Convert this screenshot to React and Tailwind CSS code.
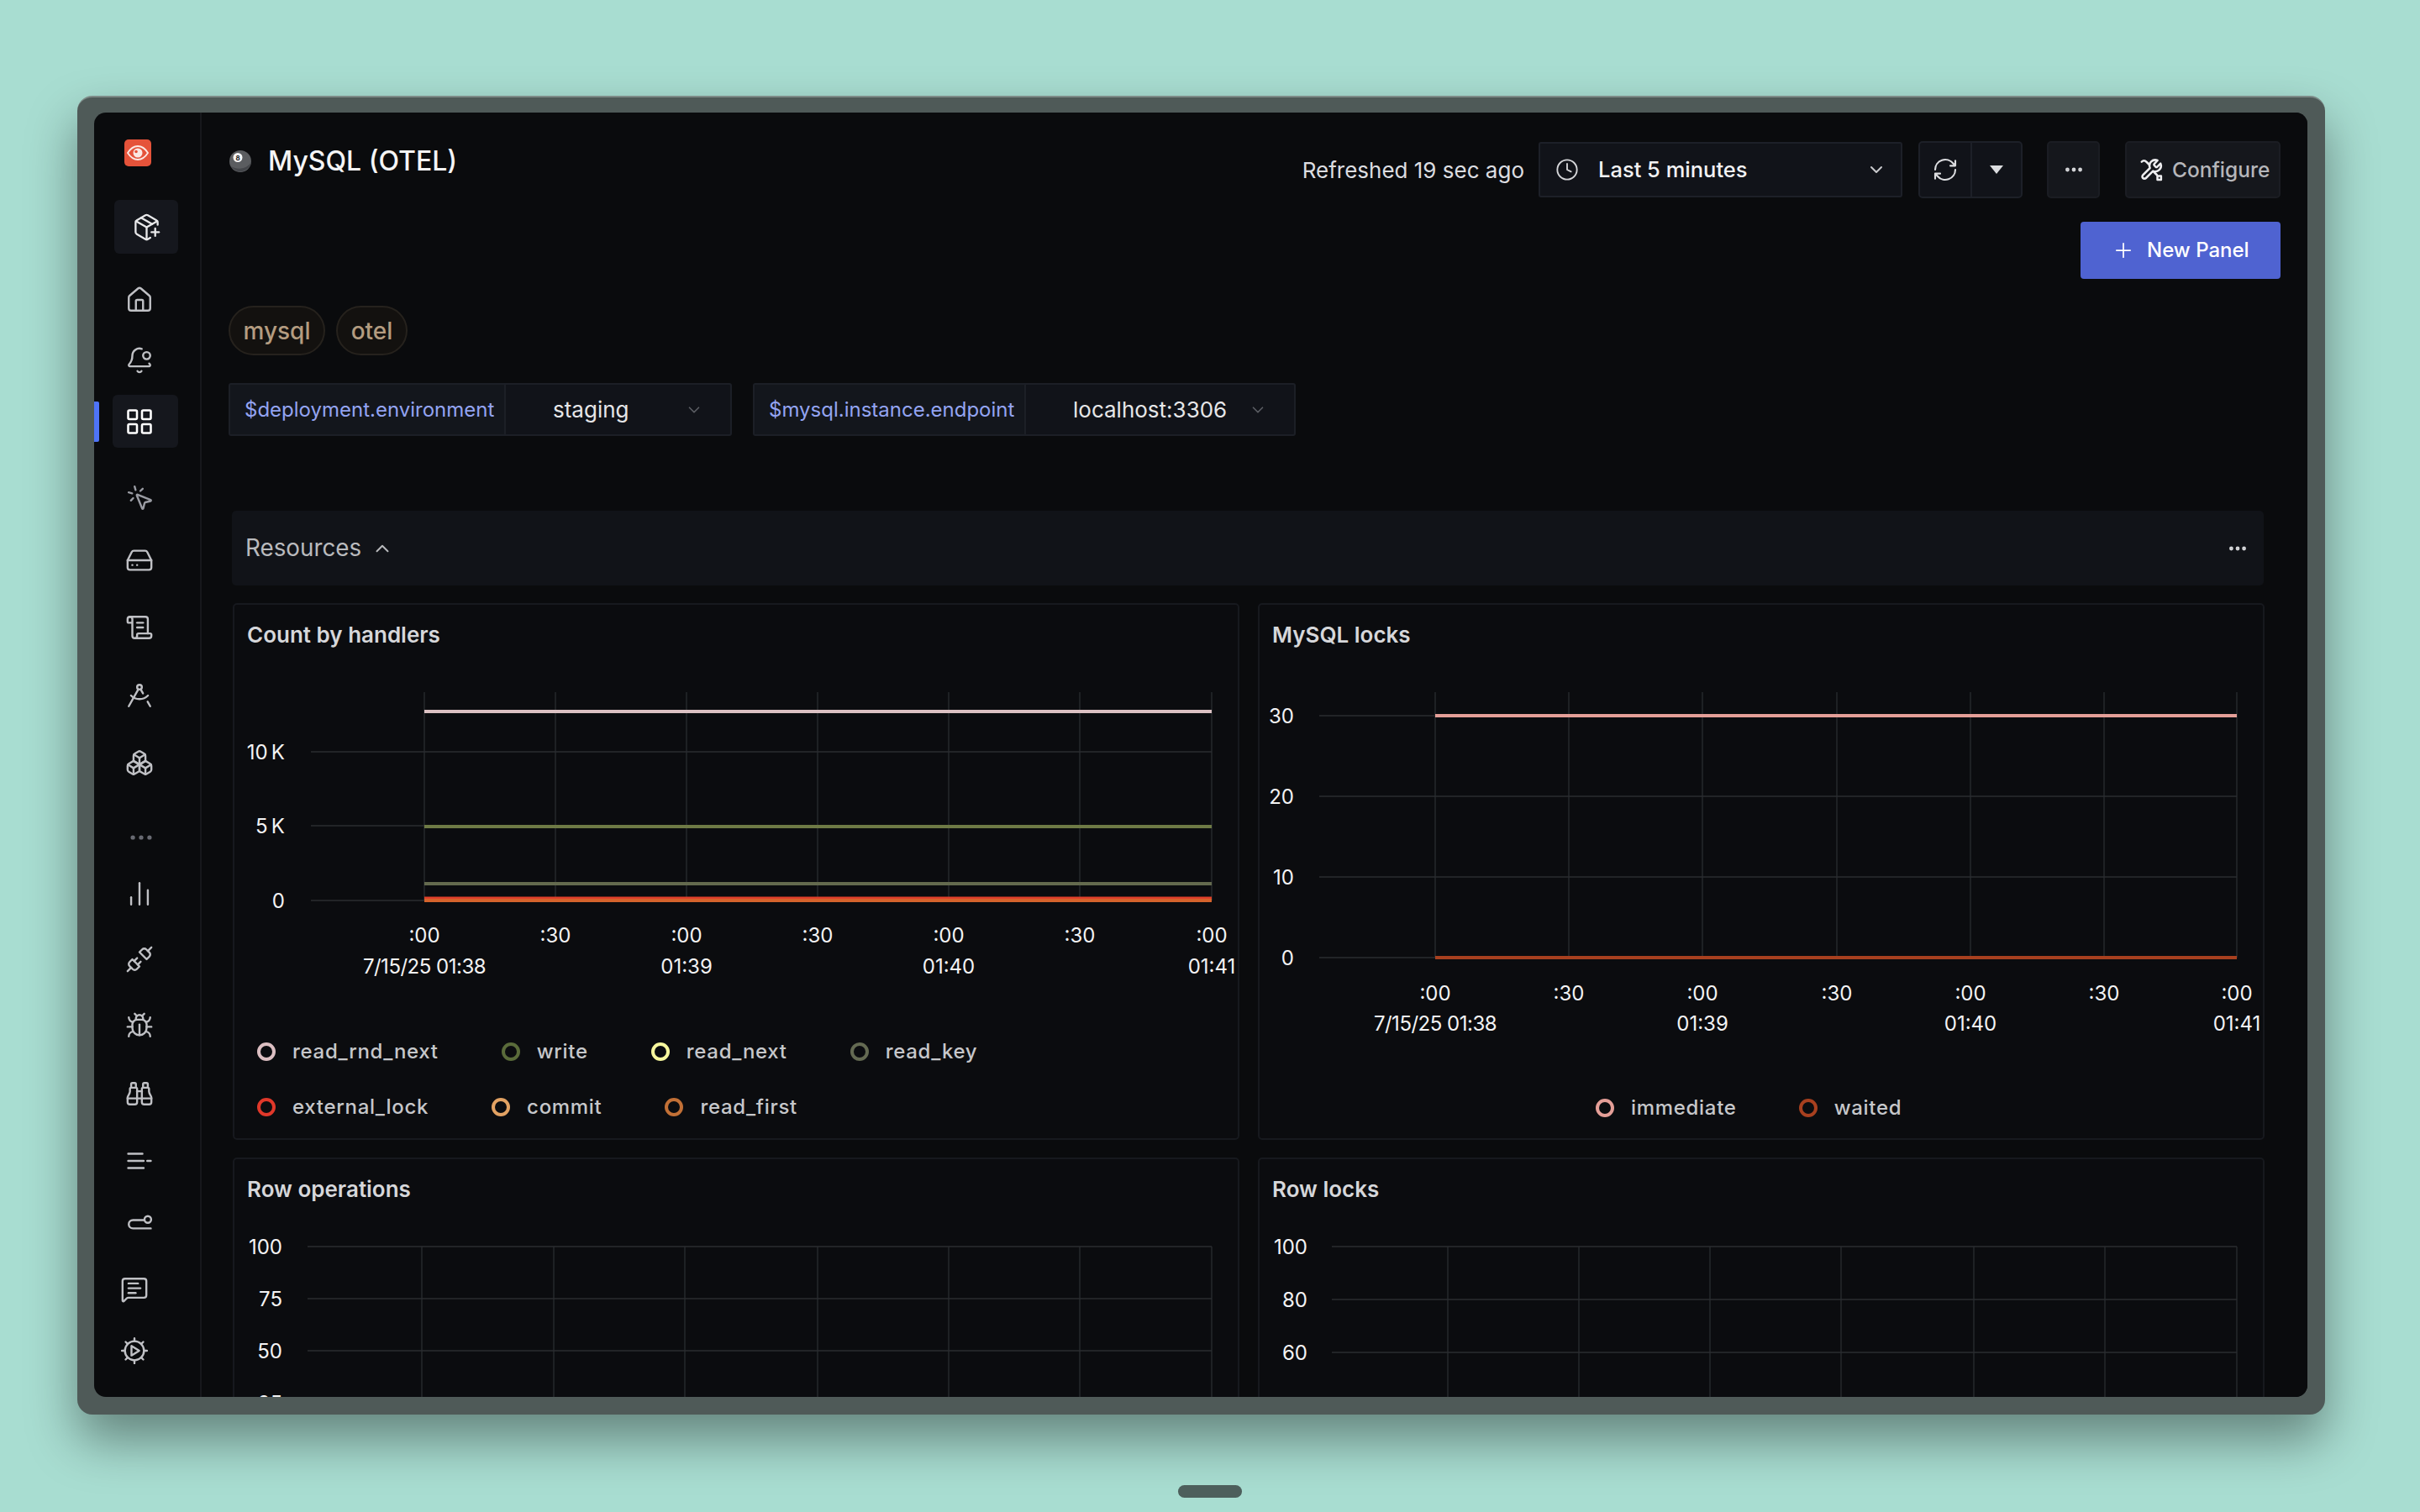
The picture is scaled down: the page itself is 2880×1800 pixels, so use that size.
import {
  House, BellDot, LayoutGrid, MousePointerClick, HardDrive, ScrollText, DraftingCompass, Boxes,
  Ellipsis, ChartNoAxesColumn, Unplug, Bug, Binoculars, MessageSquareText, PackagePlus,
  ChevronDown, ChevronUp, Clock, Plus,
} from "lucide-react"

const LogsIcon = (props) => (
  <svg viewBox="0 0 24 24" fill="none" stroke="currentColor" strokeWidth={2} strokeLinecap="round" {...props}>
    <path d="M2.500 6h12M2.500 12h13M18.500 12h3M2.500 18h13" />
  </svg>
)

const TraceIcon = (props) => (
  <svg viewBox="0 0 24 24" fill="none" stroke="currentColor" strokeWidth={2} strokeLinecap="round" {...props}>
    <path d="M16 9.500H6.500a3.500 3.500 0 0 0 0 7H21.500" />
    <circle cx="19" cy="9" r="2.800" />
  </svg>
)

const GearPlayIcon = (props) => (
  <svg viewBox="0 0 24 24" fill="none" stroke="currentColor" strokeWidth={2} strokeLinecap="round" strokeLinejoin="round" {...props}>
    <circle cx="12" cy="12" r="8" />
    <path d="M12 1.500v2.500M12 20v2.500M1.500 12H4M20 12h2.500M4.600 4.600l1.800 1.800M17.600 17.600l1.800 1.800M4.600 19.400l1.800-1.800M17.600 6.400l1.800-1.800" />
    <path d="M9.500 8v8l6.500-4z" />
  </svg>
)

const ConfigureIcon = (props) => (
  <svg viewBox="0 0 24 24" fill="none" stroke="currentColor" strokeWidth={2} strokeLinecap="round" strokeLinejoin="round" {...props}>
    <path d="M15 6.500a1 1 0 0 0 0 1.400l1.400 1.400a1 1 0 0 0 1.400 0l3.200-3.200a5.500 5.500 0 0 1-7.200 7.200l-6.700 6.700a2 2 0 0 1-2.900-2.900l6.700-6.700a5.500 5.500 0 0 1 7.200-7.200z" />
    <path d="M3 4.500c2-2 3.500-1 5 .5l2.500 2.500M14.500 14l3 3" />
    <path d="M18 18h3.500v3.500H18z" />
  </svg>
)

const Logo = () => (
  <div className="w-8 h-8 rounded-[5px] bg-[#e5533a] flex items-center justify-center">
    <svg viewBox="0 0 32 32" className="w-8 h-8" fill="none">
      <path d="M4 16c3.500-5.500 7.500-8 12-8s8.500 2.500 12 8c-3.500 5.500-7.500 8-12 8s-8.500-2.500-12-8z" stroke="#fbe9e4" strokeWidth="1.800" />
      <circle cx="16" cy="16" r="5.500" fill="#fbe9e4" />
      <circle cx="14" cy="14.500" r="1.800" fill="#e5533a" />
    </svg>
  </div>
)

const EightBall = () => (
  <svg viewBox="0 0 28 28" className="w-[28px] h-[28px] shrink-0">
    <circle cx="14" cy="14" r="13" fill="#5b5d60" />
    <path d="M3 20a13 13 0 0 0 24-6c-2 7-14 12-24 6z" fill="#44464a" />
    <circle cx="11" cy="9.500" r="5.500" fill="#f4f4f4" />
    <text x="11" y="12.500" fontSize="8" fontWeight="700" textAnchor="middle" fill="#222" fontFamily="Inter, sans-serif">8</text>
  </svg>
)

const navItems = [
  { Icon: House, mt: "mt-[41px]" },
  { Icon: BellDot, mt: "mt-[44px]" },
]

const navLower = [
  { Icon: MousePointerClick, cls: "mt-[46px] pl-[1px] text-[#9a9ca3]" },
  { Icon: HardDrive, cls: "mt-[46px] text-[#c0c1c5]" },
  { Icon: ScrollText, cls: "mt-[52px] text-[#c0c1c5]" },
  { Icon: DraftingCompass, cls: "mt-[53px] text-[#c0c1c5]" },
  { Icon: Boxes, cls: "mt-[52px] text-[#c0c1c5]" },
  { Icon: Ellipsis, cls: "mt-[61px] pl-[2px] text-[#6a6c74]" },
  { Icon: ChartNoAxesColumn, cls: "mt-[39px] text-[#c0c1c5]" },
  { Icon: Unplug, cls: "mt-[50px] text-[#c0c1c5]" },
  { Icon: Bug, cls: "mt-[51px] text-[#c0c1c5]" },
  { Icon: Binoculars, cls: "mt-[53px] text-[#c0c1c5]" },
  { Icon: LogsIcon, cls: "mt-[52px] text-[#c0c1c5]" },
  { Icon: TraceIcon, cls: "mt-[46px] text-[#c0c1c5]" },
  { Icon: MessageSquareText, cls: "mt-[51px] -ml-[6px] text-[#c0c1c5]" },
  { Icon: GearPlayIcon, cls: "mt-[45px] -ml-[6px] text-[#c0c1c5]" },
]

const Sidebar = () => (
  <aside className="w-[128px] shrink-0 border-r-2 border-[#17181c] relative">
    {/* active page marker */}
    <div className="absolute left-0 top-[344px] w-[6px] h-[48px] rounded-r-[2px] bg-[#4e74f8]" />
    <div className="pt-[32px] pl-[36px]">
      <Logo />
    </div>
    <div className="mt-[40px] ml-[24px] w-[76px] h-[64px] rounded-[6px] bg-[#15171d] flex items-center justify-center">
      <PackagePlus className="w-[35px] h-[35px] text-[#e8e8ea]" strokeWidth={1.6} />
    </div>
    {navItems.map(({ Icon, mt }, i) => (
      <div key={i} className={`${mt} pl-[40px] h-[28px] flex`}>
        <Icon className="w-[34px] h-[34px] -m-[3px] text-[#c0c1c5]" strokeWidth={1.7} />
      </div>
    ))}
    <div className="mt-[27px] ml-[22px] w-[78px] h-[63px] rounded-[6px] bg-[#15171d] flex items-center pl-[14px]">
      <LayoutGrid className="w-[36px] h-[36px] text-white" strokeWidth={1.7} />
    </div>
    <div className="pl-[40px]">
      {navLower.map(({ Icon, cls }, i) => (
        <div key={i} className={`${cls} h-[28px] flex`}>
          <Icon className="w-[34px] h-[34px] -m-[3px]" strokeWidth={1.7} />
        </div>
      ))}
    </div>
  </aside>
)

const TopBar = () => (
  <div className="flex items-start justify-between">
    <div className="flex items-center gap-[19px] h-[48px] text-[32px] leading-none font-medium text-[#f5f5f6]">
      <EightBall />
      <span>MySQL (OTEL)</span>
    </div>
    <div className="flex items-center">
      <span className="text-[26px] text-[#dcdde0] mr-[17px]">Refreshed 19 sec ago</span>
      <div className="w-[433px] h-[66px] flex items-center bg-[#111319] border-2 border-[#1d2028] rounded-[3px] pl-[18px] pr-[17px] text-[#f2f2f4]">
        <Clock className="w-[28px] h-[28px] text-[#d5d6d9]" strokeWidth={1.6} />
        <span className="ml-[23px] text-[25.500px] font-medium flex-1">Last 5 minutes</span>
        <ChevronDown className="w-[24px] h-[24px] text-[#c8c9cc]" strokeWidth={2} />
      </div>
      <div className="ml-[19px] w-[124px] h-[68px] flex bg-[#111319] border-2 border-[#1d2028] rounded-[5px]">
        <div className="w-[62px] border-r-2 border-[#1d2028] flex items-center justify-center">
          <svg viewBox="0 0 24 24" className="w-[32px] h-[32px] text-[#dcdde0]" fill="none" stroke="currentColor" strokeWidth="1.600" strokeLinecap="round" strokeLinejoin="round">
            <path d="M3 12a9 9 0 0 1 16-5.600L21 8.500M21 4v4.500h-4.500" />
            <path d="M21 12a9 9 0 0 1-16 5.600L3 15.500M3 20v-4.500h4.500" />
          </svg>
        </div>
        <div className="flex-1 flex items-center justify-center">
          <div className="w-0 h-0 border-l-[8px] border-r-[8px] border-t-[10px] border-l-transparent border-r-transparent border-t-[#dcdde0]" />
        </div>
      </div>
      <div className="ml-[29px] w-[63px] h-[68px] flex items-center justify-center bg-[#15171c] border-2 border-[#1b1d23] rounded-[5px]">
        <Ellipsis className="w-[26px] h-[26px] text-[#d5d6d9]" strokeWidth={2.4} />
      </div>
      <div className="ml-[30px] w-[185px] h-[68px] flex items-center pl-[14px] bg-[#15171c] border-2 border-[#1b1d23] rounded-[5px]">
        <ConfigureIcon className="w-[30px] h-[30px] text-[#eeeef0]" />
        <span className="ml-[10px] text-[24.500px] font-medium text-[#b5b6ba]">Configure</span>
      </div>
    </div>
  </div>
)

const Tag = ({ children, w }) => (
  <div className={`${w} h-[59px] rounded-full flex items-center justify-center bg-[#13110f] border-2 border-[#26221d] text-[28px] font-medium text-[#b49c80]`}>
    {children}
  </div>
)

const Variable = ({ name, value, labelW, valueW }) => (
  <div className="h-[63px] flex bg-[#111319] border-2 border-[#1c1f26] rounded-[3px]">
    <div className={`${labelW} bg-[#13161c] border-r-2 border-[#1c1f26] flex items-center pl-[17px] text-[24px] text-[#93a4f2]`}>
      {name}
    </div>
    <div className={`${valueW} pl-[56px] pr-[32px] flex items-center text-[26px] text-[#e6e6e8]`}>
      <span className="flex-1">{value}</span>
      <ChevronDown className="w-[22px] h-[22px] text-[#5c5e64]" strokeWidth={1.8} />
    </div>
  </div>
)

const Chart = ({ x0, y0, h, plotL, ticks, gridY, right, yLabels, labelX, top, bottom, series = [], xLabels }) => (
  <svg viewBox={`${x0} ${y0} 1194 ${h}`} className="block w-[1194px] shrink-0" style={{ height: h }} fontFamily="Inter, sans-serif" fontSize="24">
    {ticks.map((x) => (
      <line key={x} x1={x} x2={x} y1={top} y2={bottom} stroke="#26282c" strokeWidth="1.500" />
    ))}
    {gridY.map((y) => (
      <line key={y} x1={plotL} x2={right} y1={y} y2={y} stroke="#2b2d31" strokeWidth="1.500" />
    ))}
    {series.map((s, i) => (
      <line key={i} x1={ticks[0]} x2={right} y1={s.y} y2={s.y} stroke={s.color} strokeWidth="4" />
    ))}
    {yLabels.map(([label, y]) => (
      <text key={label} x={labelX} y={y + 9} textAnchor="end" fill="#f3f3f4" wordSpacing="-2.5">{label}</text>
    ))}
    {xLabels &&
      ticks.map((x, i) => (
        <text key={x} x={x} y={xLabels.y} textAnchor="middle" fill="#f3f3f4">{i % 2 ? ":30" : ":00"}</text>
      ))}
    {xLabels &&
      xLabels.rows.map((label, i) => (
        <text key={label} x={ticks[i * 2]} y={xLabels.y + 36.500} textAnchor="middle" fill="#f3f3f4" letterSpacing={i === 0 ? "-0.5" : "0"}>{label}</text>
      ))}
  </svg>
)

const LegendItem = ({ color, label }) => (
  <div className="flex items-center gap-[20px]">
    <div className="w-[22px] h-[22px] rounded-full border-[4px]" style={{ borderColor: color }} />
    <span className="text-[24px] font-medium tracking-[0.7px] text-[#c6c7ca]">{label}</span>
  </div>
)

const Panel = ({ title, children }) => (
  <div className="h-[639px] bg-[#0b0c0f] border-2 border-[#17191e] rounded-[5px] overflow-hidden">
    <div className="h-[74px] flex items-center pl-[15px] pb-[3px] text-[26px] font-semibold text-[#d6d7da]">{title}</div>
    {children}
  </div>
)

const xRows = ["7/15/25 01:38", "01:39", "01:40", "01:41"]

export default function App() {
  return (
    <div
      className="w-[2880px] h-[1800px] overflow-hidden bg-[#a8ddd1] pl-[92px] pt-[114px]"
      style={{ fontFamily: "Inter, sans-serif" }}
    >
      <div className="w-[2675px] h-[1570px] pt-[18px] pl-[20px] pr-[21px] pb-[21px] bg-[#4f5a58] rounded-[18px] border-t-2 border-[#7d8a87] shadow-[0_30px_60px_rgba(0,0,0,0.4)]">
        <div className="w-full h-full flex rounded-[14px] overflow-hidden bg-[#0a0b0d]">
          <Sidebar />
          <main className="flex-1 min-w-0 overflow-hidden px-[32px] pt-[34px] bg-[#0a0b0d]">
            <TopBar />
            <div className="-mt-[2px] pt-[30px] flex justify-end">
              <button className="w-[238px] h-[68px] rounded-[4px] bg-[#4f63d1] flex items-center pl-[37px] text-white">
                <Plus className="w-[28px] h-[28px]" strokeWidth={1.5} />
                <span className="ml-[14px] text-[24px] font-medium">New Panel</span>
              </button>
            </div>

            <div className="mt-[32px] flex gap-[13px]">
              <Tag w="w-[115px]">mysql</Tag>
              <Tag w="w-[85px]">otel</Tag>
            </div>

            <div className="mt-[33px] flex gap-[25px]">
              <Variable name="$deployment.environment" value="staging" labelW="w-[328px]" valueW="w-[267px]" />
              <Variable name="$mysql.instance.endpoint" value="localhost:3306" labelW="w-[323px]" valueW="w-[319px]" />
            </div>

            {/* Resources section */}
            <div className="mt-[89px] ml-[4px] w-[2418px] h-[89px] rounded-[5px] bg-[#111318] flex items-center pl-[16px] pr-[18px] text-[#b9babd]">
              <span className="text-[27.800px]">Resources</span>
              <ChevronUp className="ml-[12px] w-[26px] h-[26px]" strokeWidth={1.8} />
              <Ellipsis className="ml-auto w-[26px] h-[26px] text-[#d5d6d9]" strokeWidth={2.4} />
            </div>

            <div className="mt-[21px] ml-[5px] grid grid-cols-[1198px_1198px] gap-x-[22px] gap-y-[21px]">
              <Panel title="Count by handlers">
                <Chart
                  x0={279}
                  y0={794}
                  h={380}
                  plotL={370}
                  ticks={[505, 661, 817, 973, 1129, 1285, 1442]}
                  gridY={[895, 983, 1072]}
                  right={1442}
                  labelX={339}
                  top={824}
                  bottom={1072}
                  yLabels={[["10 K", 895], ["5 K", 983], ["0", 1072]]}
                  series={[
                    { y: 847, color: "#dcc1c3" },
                    { y: 984, color: "#6e7a45" },
                    { y: 1052, color: "#646a4e" },
                    { y: 1069.500, color: "#e0402a" },
                    { y: 1072, color: "#d5632c" },
                  ]}
                  xLabels={{ y: 1122, rows: xRows }}
                />
                <div className="mt-[45px] pl-[27px]">
                  <div className="h-[66px] flex items-center gap-[75px]">
                    <LegendItem color="#dcbfc2" label="read_rnd_next" />
                    <LegendItem color="#5a6b3a" label="write" />
                    <LegendItem color="#f7f79d" label="read_next" />
                    <LegendItem color="#646a52" label="read_key" />
                  </div>
                  <div className="h-[66px] flex items-center gap-[75px]">
                    <LegendItem color="#e0382a" label="external_lock" />
                    <LegendItem color="#e2a263" label="commit" />
                    <LegendItem color="#c27036" label="read_first" />
                  </div>
                </div>
              </Panel>

              <Panel title="MySQL locks">
                <Chart
                  x0={1499}
                  y0={794}
                  h={440}
                  plotL={1570}
                  ticks={[1708, 1867, 2026, 2186, 2345, 2504, 2662]}
                  gridY={[852, 948, 1044, 1140]}
                  right={2662}
                  labelX={1540}
                  top={824}
                  bottom={1140}
                  yLabels={[["30", 852], ["20", 948], ["10", 1044], ["0", 1140]]}
                  series={[
                    { y: 852, color: "#e59f98" },
                    { y: 1140, color: "#a8401f" },
                  ]}
                  xLabels={{ y: 1190.500, rows: xRows }}
                />
                <div className="mt-[52px] h-[66px] flex items-center pl-[400px] gap-[74px]">
                  <LegendItem color="#e59f98" label="immediate" />
                  <LegendItem color="#a8401f" label="waited" />
                </div>
              </Panel>

              <Panel title="Row operations">
                <Chart
                  x0={279}
                  y0={1454}
                  h={240}
                  plotL={366}
                  ticks={[502, 659, 815, 973, 1129, 1285, 1442]}
                  gridY={[1484, 1546, 1608, 1670]}
                  right={1442}
                  labelX={336}
                  top={1484}
                  bottom={1694}
                  yLabels={[["100", 1484], ["75", 1546], ["50", 1608], ["25", 1670]]}
                />
              </Panel>

              <Panel title="Row locks">
                <Chart
                  x0={1499}
                  y0={1454}
                  h={240}
                  plotL={1585}
                  ticks={[1723, 1879, 2035, 2191, 2349, 2505, 2662]}
                  gridY={[1484, 1547, 1610]}
                  right={2662}
                  labelX={1556}
                  top={1484}
                  bottom={1694}
                  yLabels={[["100", 1484], ["80", 1547], ["60", 1610]]}
                />
              </Panel>
            </div>
          </main>
        </div>
      </div>
      {/* home indicator */}
      <div className="mt-[84px] ml-[1310px] w-[76px] h-[15px] rounded-full bg-[#4d5f5c]" />
    </div>
  )
}
